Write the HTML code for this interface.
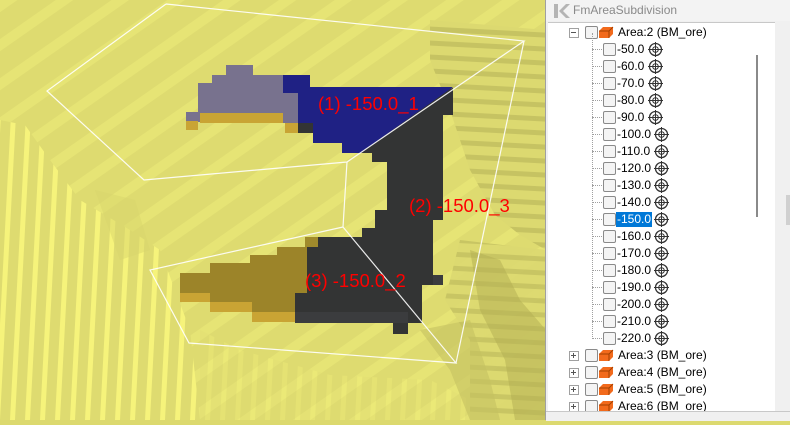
<!DOCTYPE html>
<html><head><meta charset="utf-8"><style>
html,body{margin:0;padding:0;width:790px;height:420px;overflow:hidden;background:#dcd96f;font-family:"Liberation Sans",sans-serif}
#scene{position:absolute;left:0;top:0;width:546px;height:420px}
#panel{position:absolute;left:545px;top:0;width:245px;height:420px;background:#f0f0f0;border-left:1px solid #a0a0a0}
#title{position:absolute;left:0;top:0;height:21px;width:245px;background:#f3f3f3;color:#8a8a8a;font-size:12px}
#tree{position:absolute;left:2px;top:22px;width:227px;height:389px;background:#fff;border-top:1px solid #c8c8c8;overflow:hidden}
.row{position:absolute;height:17px;font-size:12px;color:#000;line-height:17px;white-space:nowrap}
.cb{position:absolute;width:11px;height:11px;border:1px solid #8a8a8a;border-radius:2px;background:#f4f4f4;top:2px}
.tg{position:absolute;top:1px}
.dot{position:absolute;border-top:1px dotted #a0a0a0;height:0}
</style></head><body>
<div id="scene">
<svg width="546" height="420" viewBox="0 0 546 420" xmlns="http://www.w3.org/2000/svg">
<defs>
<pattern id="vs" width="15" height="420" patternUnits="userSpaceOnUse" patternTransform="skewX(-3)">
<rect width="15" height="420" fill="#dedb70"/><rect x="2" width="5" height="420" fill="#f6f37b"/></pattern>
<pattern id="hs" width="546" height="14" patternUnits="userSpaceOnUse" patternTransform="skewY(3)">
<rect width="546" height="14" fill="#dcd970"/><rect y="4" width="546" height="5" fill="#c6c362"/></pattern>
<pattern id="ds" width="32" height="32" patternUnits="userSpaceOnUse" patternTransform="rotate(-35)">
<rect width="32" height="32" fill="#dedb70"/><rect width="32" height="10" fill="#e6e475"/></pattern>
</defs>
<rect width="546" height="420" fill="url(#ds)"/>
<polygon points="0,120 25,125 50,160 80,200 130,230 160,250 190,330 200,420 0,420" fill="url(#vs)"/>
<polygon points="95,190 135,200 150,250 120,260" fill="#d8d56c" opacity="0.5"/>
<polygon points="200,330 240,350 330,375 430,380 470,400 470,420 200,420" fill="url(#vs)" opacity="0.3"/>
<polygon points="430,20 546,30 546,250 520,235 495,215 470,170 450,110 430,60" fill="url(#hs)"/>
<polygon points="460,240 546,250 546,420 470,420 470,340 445,300" fill="url(#hs)" opacity="0.9"/>
<polygon points="470,250 500,260 520,300 546,330 546,420 515,420 505,360 480,310" fill="#b1ae52" opacity="0.5"/>
<polygon points="420,330 470,320 490,380 500,420 470,420 450,370" fill="#c4c160" opacity="0.6"/>
<!-- black -->
<polygon points="453,88 453,115 443,115 443,220 433,220 433,285 422,285 422,323 408,323 408,334 393,334 393,323 295,323 295,293 307,293 307,237 362,237 362,228 375,228 375,210 387,210 387,162 372,162 372,153 342,153 342,143 313,143 313,133 298,133 298,123" fill="#333434"/>
<rect x="295" y="312" width="113" height="11" fill="#3b3c3e"/>
<rect x="433" y="275" width="10" height="10" fill="#3b3c3e"/>
<!-- olive -->
<rect x="305" y="237" width="13" height="10" fill="#a08a2c"/>
<polygon points="180,273 210,273 210,263 250,263 250,255 277,255 277,247 307,247 307,293 295,293 295,312 252,312 252,302 210,302 210,293 180,293" fill="#9c8429"/>
<rect x="180" y="293" width="30" height="9" fill="#c9a434"/>
<rect x="210" y="302" width="42" height="10" fill="#c9a434"/>
<rect x="252" y="312" width="43" height="10" fill="#c9a434"/>
<!-- purple hatched -->
<polygon points="226,65 253,65 253,75 283,75 283,93 298,93 298,123 283,123 283,113 200,113 200,122 186,122 186,112 198,112 198,83 212,83 212,75 226,75" fill="#78728e"/>
<rect x="200" y="113" width="83" height="10" fill="#c9a434"/>
<rect x="186" y="121" width="12" height="9" fill="#c9a434"/>
<rect x="285" y="123" width="13" height="10" fill="#c9a434"/>
<!-- blue -->
<polygon points="283,75 310,75 310,87 453,87 360,153 342,153 342,143 313,143 313,123 298,123 298,93 283,93" fill="#1f2184"/>
<g stroke="#ffffff" stroke-width="1.2" fill="none" opacity="0.9">
<polyline points="166,4 524,41 347,162 144,180 47,91 166,4"/>
<line x1="347" y1="162" x2="343" y2="227"/>
<polyline points="343,227 150,270 189,343 456,363 343,227"/>
<line x1="524" y1="41" x2="456" y2="363"/>
</g>
<g fill="#ff0000" font-family="Liberation Sans, sans-serif" font-size="18.5">
<text x="318" y="110">(1) -150.0_1</text>
<text x="409" y="212">(2) -150.0_3</text>
<text x="305" y="287">(3) -150.0_2</text>
</g>
</svg>
</div>
<div id="panel">
<div id="title">
<svg width="22" height="18" style="position:absolute;left:5px;top:2px"><path d="M3 2 L7 2 L7 16 L3 16 Z M8 9 L15 2 L19 2 L12 9 L19 16 L15 16 Z" fill="#b4b4b4"/></svg>
<span style="position:absolute;left:27px;top:3px">FmAreaSubdivision</span>
</div>
<div id="tree">
<div style="position:absolute;left:208px;top:32px;width:2px;height:162px;background:#8a8a8a"></div>
</div>
<div style="position:absolute;left:0;top:411px;width:245px;height:9px;background:#f0f0f0;border-top:1px solid #c8c8c8"></div>
<div style="position:absolute;left:240px;top:195px;width:5px;height:30px;background:#d0d0d0"></div>
</div>
<div style="position:absolute;left:547px;top:23px">
<div class="row" style="left:0;top:1px;width:220px">
<span style="position:absolute;left:22px;top:4px;width:8px;height:8px;border:1px solid #a0a0a0;background:#fff"></span><span style="position:absolute;left:24px;top:8px;width:5px;height:1px;background:#555"></span>
<span class="cb" style="left:38px"></span>
<svg style="position:absolute;left:51px;top:2px" width="16" height="13"><path d="M1 5 L5 1 L15 1 L15 8 L11 12 L1 12 Z" fill="#f26a1c"/><path d="M1 5 L11 5 L15 1 M11 5 L11 12" stroke="#a34000" fill="none" stroke-width="1"/></svg>
<span style="position:absolute;left:71px">Area:2 (BM_ore)</span></div>
</div>
<div style="position:absolute;left:547px;top:23px">
<div class="row" style="left:0;top:18px"><span class="dot" style="left:45px;top:8px;width:10px"></span><span class="cb" style="left:56px"></span><span style="position:absolute;left:70px">-50.0</span><svg class="tg" style="left:101px" width="15" height="15"><circle cx="7.5" cy="7.5" r="6" fill="none" stroke="#333" stroke-width="1.3"/><circle cx="7.5" cy="7.5" r="2.8" fill="none" stroke="#333"/><path d="M7.5 0V15M0 7.5H15" stroke="#333"/></svg></div>
<div class="row" style="left:0;top:35px"><span class="dot" style="left:45px;top:8px;width:10px"></span><span class="cb" style="left:56px"></span><span style="position:absolute;left:70px">-60.0</span><svg class="tg" style="left:101px" width="15" height="15"><circle cx="7.5" cy="7.5" r="6" fill="none" stroke="#333" stroke-width="1.3"/><circle cx="7.5" cy="7.5" r="2.8" fill="none" stroke="#333"/><path d="M7.5 0V15M0 7.5H15" stroke="#333"/></svg></div>
<div class="row" style="left:0;top:52px"><span class="dot" style="left:45px;top:8px;width:10px"></span><span class="cb" style="left:56px"></span><span style="position:absolute;left:70px">-70.0</span><svg class="tg" style="left:101px" width="15" height="15"><circle cx="7.5" cy="7.5" r="6" fill="none" stroke="#333" stroke-width="1.3"/><circle cx="7.5" cy="7.5" r="2.8" fill="none" stroke="#333"/><path d="M7.5 0V15M0 7.5H15" stroke="#333"/></svg></div>
<div class="row" style="left:0;top:69px"><span class="dot" style="left:45px;top:8px;width:10px"></span><span class="cb" style="left:56px"></span><span style="position:absolute;left:70px">-80.0</span><svg class="tg" style="left:101px" width="15" height="15"><circle cx="7.5" cy="7.5" r="6" fill="none" stroke="#333" stroke-width="1.3"/><circle cx="7.5" cy="7.5" r="2.8" fill="none" stroke="#333"/><path d="M7.5 0V15M0 7.5H15" stroke="#333"/></svg></div>
<div class="row" style="left:0;top:86px"><span class="dot" style="left:45px;top:8px;width:10px"></span><span class="cb" style="left:56px"></span><span style="position:absolute;left:70px">-90.0</span><svg class="tg" style="left:101px" width="15" height="15"><circle cx="7.5" cy="7.5" r="6" fill="none" stroke="#333" stroke-width="1.3"/><circle cx="7.5" cy="7.5" r="2.8" fill="none" stroke="#333"/><path d="M7.5 0V15M0 7.5H15" stroke="#333"/></svg></div>
<div class="row" style="left:0;top:103px"><span class="dot" style="left:45px;top:8px;width:10px"></span><span class="cb" style="left:56px"></span><span style="position:absolute;left:70px">-100.0</span><svg class="tg" style="left:107px" width="15" height="15"><circle cx="7.5" cy="7.5" r="6" fill="none" stroke="#333" stroke-width="1.3"/><circle cx="7.5" cy="7.5" r="2.8" fill="none" stroke="#333"/><path d="M7.5 0V15M0 7.5H15" stroke="#333"/></svg></div>
<div class="row" style="left:0;top:120px"><span class="dot" style="left:45px;top:8px;width:10px"></span><span class="cb" style="left:56px"></span><span style="position:absolute;left:70px">-110.0</span><svg class="tg" style="left:107px" width="15" height="15"><circle cx="7.5" cy="7.5" r="6" fill="none" stroke="#333" stroke-width="1.3"/><circle cx="7.5" cy="7.5" r="2.8" fill="none" stroke="#333"/><path d="M7.5 0V15M0 7.5H15" stroke="#333"/></svg></div>
<div class="row" style="left:0;top:137px"><span class="dot" style="left:45px;top:8px;width:10px"></span><span class="cb" style="left:56px"></span><span style="position:absolute;left:70px">-120.0</span><svg class="tg" style="left:107px" width="15" height="15"><circle cx="7.5" cy="7.5" r="6" fill="none" stroke="#333" stroke-width="1.3"/><circle cx="7.5" cy="7.5" r="2.8" fill="none" stroke="#333"/><path d="M7.5 0V15M0 7.5H15" stroke="#333"/></svg></div>
<div class="row" style="left:0;top:154px"><span class="dot" style="left:45px;top:8px;width:10px"></span><span class="cb" style="left:56px"></span><span style="position:absolute;left:70px">-130.0</span><svg class="tg" style="left:107px" width="15" height="15"><circle cx="7.5" cy="7.5" r="6" fill="none" stroke="#333" stroke-width="1.3"/><circle cx="7.5" cy="7.5" r="2.8" fill="none" stroke="#333"/><path d="M7.5 0V15M0 7.5H15" stroke="#333"/></svg></div>
<div class="row" style="left:0;top:171px"><span class="dot" style="left:45px;top:8px;width:10px"></span><span class="cb" style="left:56px"></span><span style="position:absolute;left:70px">-140.0</span><svg class="tg" style="left:107px" width="15" height="15"><circle cx="7.5" cy="7.5" r="6" fill="none" stroke="#333" stroke-width="1.3"/><circle cx="7.5" cy="7.5" r="2.8" fill="none" stroke="#333"/><path d="M7.5 0V15M0 7.5H15" stroke="#333"/></svg></div>
<div class="row" style="left:0;top:188px"><span class="dot" style="left:45px;top:8px;width:10px"></span><span class="cb" style="left:56px"></span><span style="position:absolute;left:69px;top:1px;height:15px;line-height:15px;padding:0 1px;background:#0078d7;color:#fff">-150.0</span><svg class="tg" style="left:107px" width="15" height="15"><circle cx="7.5" cy="7.5" r="6" fill="none" stroke="#333" stroke-width="1.3"/><circle cx="7.5" cy="7.5" r="2.8" fill="none" stroke="#333"/><path d="M7.5 0V15M0 7.5H15" stroke="#333"/></svg></div>
<div class="row" style="left:0;top:205px"><span class="dot" style="left:45px;top:8px;width:10px"></span><span class="cb" style="left:56px"></span><span style="position:absolute;left:70px">-160.0</span><svg class="tg" style="left:107px" width="15" height="15"><circle cx="7.5" cy="7.5" r="6" fill="none" stroke="#333" stroke-width="1.3"/><circle cx="7.5" cy="7.5" r="2.8" fill="none" stroke="#333"/><path d="M7.5 0V15M0 7.5H15" stroke="#333"/></svg></div>
<div class="row" style="left:0;top:222px"><span class="dot" style="left:45px;top:8px;width:10px"></span><span class="cb" style="left:56px"></span><span style="position:absolute;left:70px">-170.0</span><svg class="tg" style="left:107px" width="15" height="15"><circle cx="7.5" cy="7.5" r="6" fill="none" stroke="#333" stroke-width="1.3"/><circle cx="7.5" cy="7.5" r="2.8" fill="none" stroke="#333"/><path d="M7.5 0V15M0 7.5H15" stroke="#333"/></svg></div>
<div class="row" style="left:0;top:239px"><span class="dot" style="left:45px;top:8px;width:10px"></span><span class="cb" style="left:56px"></span><span style="position:absolute;left:70px">-180.0</span><svg class="tg" style="left:107px" width="15" height="15"><circle cx="7.5" cy="7.5" r="6" fill="none" stroke="#333" stroke-width="1.3"/><circle cx="7.5" cy="7.5" r="2.8" fill="none" stroke="#333"/><path d="M7.5 0V15M0 7.5H15" stroke="#333"/></svg></div>
<div class="row" style="left:0;top:256px"><span class="dot" style="left:45px;top:8px;width:10px"></span><span class="cb" style="left:56px"></span><span style="position:absolute;left:70px">-190.0</span><svg class="tg" style="left:107px" width="15" height="15"><circle cx="7.5" cy="7.5" r="6" fill="none" stroke="#333" stroke-width="1.3"/><circle cx="7.5" cy="7.5" r="2.8" fill="none" stroke="#333"/><path d="M7.5 0V15M0 7.5H15" stroke="#333"/></svg></div>
<div class="row" style="left:0;top:273px"><span class="dot" style="left:45px;top:8px;width:10px"></span><span class="cb" style="left:56px"></span><span style="position:absolute;left:70px">-200.0</span><svg class="tg" style="left:107px" width="15" height="15"><circle cx="7.5" cy="7.5" r="6" fill="none" stroke="#333" stroke-width="1.3"/><circle cx="7.5" cy="7.5" r="2.8" fill="none" stroke="#333"/><path d="M7.5 0V15M0 7.5H15" stroke="#333"/></svg></div>
<div class="row" style="left:0;top:290px"><span class="dot" style="left:45px;top:8px;width:10px"></span><span class="cb" style="left:56px"></span><span style="position:absolute;left:70px">-210.0</span><svg class="tg" style="left:107px" width="15" height="15"><circle cx="7.5" cy="7.5" r="6" fill="none" stroke="#333" stroke-width="1.3"/><circle cx="7.5" cy="7.5" r="2.8" fill="none" stroke="#333"/><path d="M7.5 0V15M0 7.5H15" stroke="#333"/></svg></div>
<div class="row" style="left:0;top:307px"><span class="dot" style="left:45px;top:8px;width:10px"></span><span class="cb" style="left:56px"></span><span style="position:absolute;left:70px">-220.0</span><svg class="tg" style="left:107px" width="15" height="15"><circle cx="7.5" cy="7.5" r="6" fill="none" stroke="#333" stroke-width="1.3"/><circle cx="7.5" cy="7.5" r="2.8" fill="none" stroke="#333"/><path d="M7.5 0V15M0 7.5H15" stroke="#333"/></svg></div>
<div style="position:absolute;left:45px;top:10px;height:306px;border-left:1px dotted #a0a0a0"></div>
</div>
<div style="position:absolute;left:547px;top:23px;height:388px;width:225px;overflow:hidden">
<div class="row" style="left:0;top:324px"><span style="position:absolute;left:22px;top:4px;width:8px;height:8px;border:1px solid #a0a0a0;background:#fff"></span><span style="position:absolute;left:24px;top:8px;width:5px;height:1px;background:#555"></span><span style="position:absolute;left:26px;top:6px;width:1px;height:5px;background:#555"></span><span class="cb" style="left:38px"></span><svg style="position:absolute;left:51px;top:2px" width="16" height="13"><path d="M1 5 L5 1 L15 1 L15 8 L11 12 L1 12 Z" fill="#f26a1c"/><path d="M1 5 L11 5 L15 1 M11 5 L11 12" stroke="#a34000" fill="none"/></svg><span style="position:absolute;left:71px">Area:3 (BM_ore)</span></div>
<div class="row" style="left:0;top:341px"><span style="position:absolute;left:22px;top:4px;width:8px;height:8px;border:1px solid #a0a0a0;background:#fff"></span><span style="position:absolute;left:24px;top:8px;width:5px;height:1px;background:#555"></span><span style="position:absolute;left:26px;top:6px;width:1px;height:5px;background:#555"></span><span class="cb" style="left:38px"></span><svg style="position:absolute;left:51px;top:2px" width="16" height="13"><path d="M1 5 L5 1 L15 1 L15 8 L11 12 L1 12 Z" fill="#f26a1c"/><path d="M1 5 L11 5 L15 1 M11 5 L11 12" stroke="#a34000" fill="none"/></svg><span style="position:absolute;left:71px">Area:4 (BM_ore)</span></div>
<div class="row" style="left:0;top:358px"><span style="position:absolute;left:22px;top:4px;width:8px;height:8px;border:1px solid #a0a0a0;background:#fff"></span><span style="position:absolute;left:24px;top:8px;width:5px;height:1px;background:#555"></span><span style="position:absolute;left:26px;top:6px;width:1px;height:5px;background:#555"></span><span class="cb" style="left:38px"></span><svg style="position:absolute;left:51px;top:2px" width="16" height="13"><path d="M1 5 L5 1 L15 1 L15 8 L11 12 L1 12 Z" fill="#f26a1c"/><path d="M1 5 L11 5 L15 1 M11 5 L11 12" stroke="#a34000" fill="none"/></svg><span style="position:absolute;left:71px">Area:5 (BM_ore)</span></div>
<div class="row" style="left:0;top:375px"><span style="position:absolute;left:22px;top:4px;width:8px;height:8px;border:1px solid #a0a0a0;background:#fff"></span><span style="position:absolute;left:24px;top:8px;width:5px;height:1px;background:#555"></span><span style="position:absolute;left:26px;top:6px;width:1px;height:5px;background:#555"></span><span class="cb" style="left:38px"></span><svg style="position:absolute;left:51px;top:2px" width="16" height="13"><path d="M1 5 L5 1 L15 1 L15 8 L11 12 L1 12 Z" fill="#f26a1c"/><path d="M1 5 L11 5 L15 1 M11 5 L11 12" stroke="#a34000" fill="none"/></svg><span style="position:absolute;left:71px">Area:6 (BM_ore)</span></div>
</div>
</body></html>
